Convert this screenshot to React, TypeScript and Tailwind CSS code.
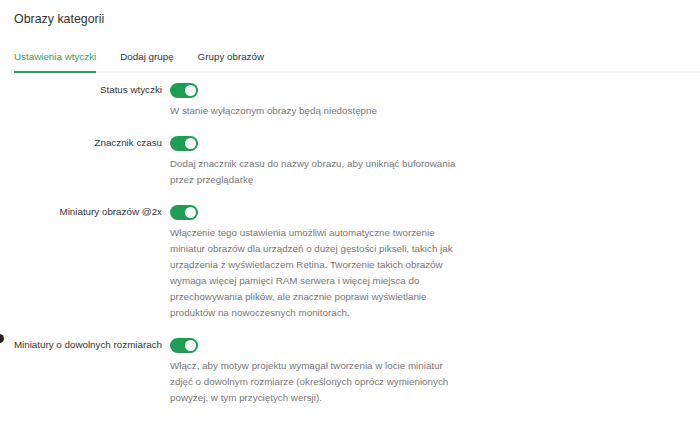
import React from "react";

const rows = [
  {
    label: "Status wtyczki",
    desc: "W stanie wyłączonym obrazy będą niedostępne",
  },
  {
    label: "Znacznik czasu",
    desc: "Dodaj znacznik czasu do nazwy obrazu, aby uniknąć buforowania przez przeglądarkę",
  },
  {
    label: "Miniatury obrazów @2x",
    desc: "Włączenie tego ustawienia umożliwi automatyczne tworzenie miniatur obrazów dla urządzeń o dużej gęstości pikseli, takich jak urządzenia z wyświetlaczem Retina. Tworzenie takich obrazów wymaga więcej pamięci RAM serwera i więcej miejsca do przechowywania plików, ale znacznie poprawi wyświetlanie produktów na nowoczesnych monitorach.",
  },
  {
    label: "Miniatury o dowolnych rozmiarach",
    desc: "Włącz, aby motyw projektu wymagał tworzenia w locie miniatur zdjęć o dowolnym rozmiarze (określonych oprócz wymienionych powyżej, w tym przyciętych wersji).",
  },
];

function Toggle() {
  return (
    <div className="relative w-[28px] h-[15px] rounded-full bg-[#1f9d55] shrink-0">
      <div className="absolute right-[2px] top-[2px] w-[11px] h-[11px] rounded-full bg-white" />
    </div>
  );
}

export default function App() {
  return (
    <div className="relative w-[700px] h-[422px] overflow-hidden bg-white font-['Liberation_Sans',Arial,sans-serif]">
      <div className="pl-[14px] pt-[11px]">
        <h1 className="text-[12.4px] leading-[16px] text-[#333]">Obrazy kategorii</h1>

        <div className="mt-[23px] flex border-b-2 border-[#f6f6f6]">
          <div className="-mb-[2px] border-b-2 border-[#27a25e] pb-[7px] text-[9.8px] leading-[14px] text-[#2f9e5f]">
            Ustawienia wtyczki
          </div>
          <div className="ml-[24px] pb-[7px] text-[9.8px] leading-[14px] text-[#333]">
            Dodaj grupę
          </div>
          <div className="ml-[24px] pb-[7px] text-[9.8px] leading-[14px] text-[#333]">
            Grupy obrazów
          </div>
        </div>
      </div>

      <div className="mt-[10px] flex flex-col gap-[17px] text-[9.8px]">
        {rows.map((row) => (
          <div key={row.label} className="flex gap-[8px]">
            <div className="w-[162px] shrink-0 h-[15px] flex items-center justify-end text-[#333] whitespace-nowrap">
              {row.label}
            </div>
            <div className="flex flex-col">
              <Toggle />
              <p className="mt-[5px] w-[296px] leading-[16px] text-[#777]">{row.desc}</p>
            </div>
          </div>
        ))}
      </div>

      <div className="absolute left-[-5px] top-[334px] w-[9px] h-[9px] rounded-full bg-[#222]" />
    </div>
  );
}
